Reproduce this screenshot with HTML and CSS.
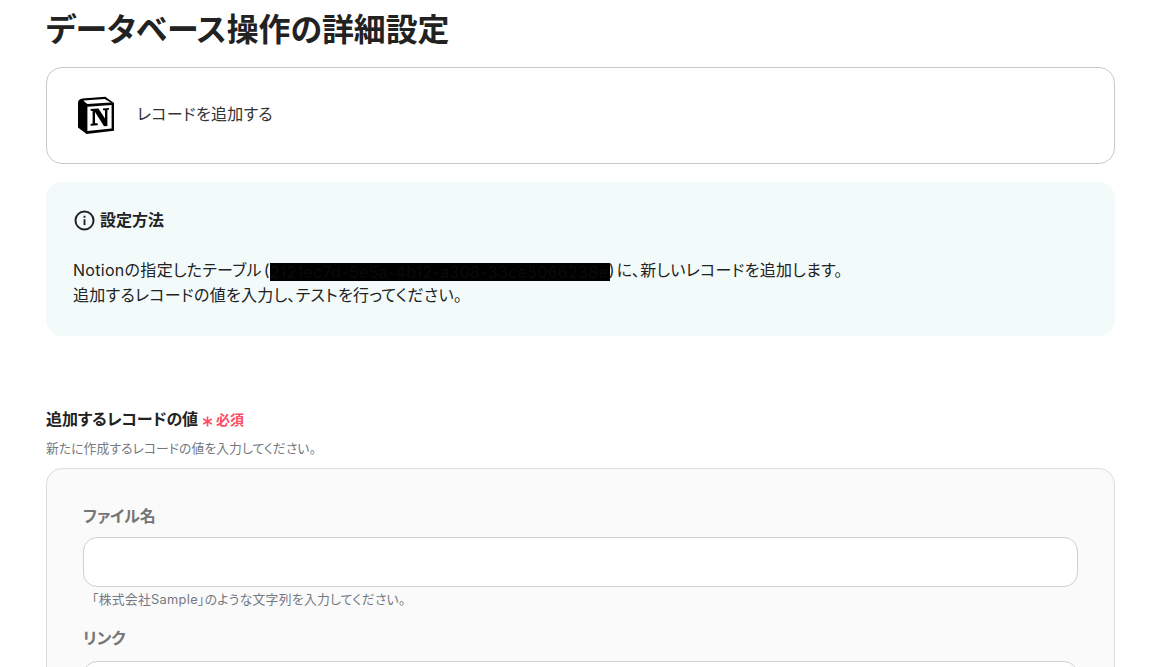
FILE: index.html
```html
<!DOCTYPE html>
<html lang="ja">
<head>
<meta charset="utf-8">
<title>データベース操作の詳細設定</title>
<link rel="stylesheet" href="styles.css">
</head>
<body>
<main class="page">
  <h1 class="title">データベース操作の詳細設定</h1>
  <section class="action-card">
    <svg class="notion-logo" viewBox="0 0 40 40" aria-hidden="true">
      <path d="M7 3.5 L29 1.5 L37.5 7.5 V34 L11 37 L3 31 V7 Z" fill="#fff"/>
      <path fill="#000" fill-rule="evenodd" d="M6.5 2.6 L29.3 .8 L38 7 V34.8 L10.6 37.9 L2 31.6 V6.5 C2 4.3 4 2.8 6.5 2.6 Z M8.4 5.8 L11.4 8 L34.8 6.5 L28.6 3 L7.5 4.4 Z M11.4 10.8 V35 L35.6 32.4 V9 Z"/>
      <path fill="#000" d="M14.6 13 L22.4 12.5 L29 22.6 V14.4 L27 14 V12.4 L33 12 V13.4 L31.4 14 V30 L28 30.3 L19 16 V27 L21.8 27.6 V29.2 L14.6 29.7 V28.1 L16.6 27.6 V15.1 L14.6 14.7 Z"/>
    </svg>
    <span class="action-name">レコードを追加する</span>
  </section>
  <section class="info">
    <h2 class="info-head">
      <svg class="info-icon" viewBox="0 0 20 20" aria-hidden="true">
        <circle cx="10" cy="10" r="8.6" fill="none" stroke="#222" stroke-width="1.9"/>
        <rect x="9.1" y="8.8" width="1.8" height="5.6" fill="#222"/>
        <rect x="9.1" y="5.5" width="1.8" height="1.9" fill="#222"/>
      </svg>
      設定方法
    </h2>
    <p class="info-text">Notionの指定したテーブル (<span class="redacted">2121ec7d-5e5a-4b12-a308-33ce5066238e</span>) に、新しいレコードを追加します。<br>追加するレコードの値を入力し、テストを行ってください。</p>
  </section>
  <section class="field">
    <div class="field-label">追加するレコードの値<span class="required"><svg class="asterisk" viewBox="0 0 12 12" aria-hidden="true"><path d="M6 .6 V11.4 M1.3 3.3 L10.7 8.7 M10.7 3.3 L1.3 8.7" fill="none" stroke="#fb4e64" stroke-width="1.8"/></svg>必須</span></div>
    <p class="field-help">新たに作成するレコードの値を入力してください。</p>
    <div class="panel">
      <label class="sub-label">ファイル名</label>
      <div class="input"></div>
      <p class="hint">「株式会社Sample」のような文字列を入力してください。</p>
      <label class="sub-label sub-label-next">リンク</label>
      <div class="input input-next"></div>
    </div>
  </section>
</main>
</body>
</html>
```
FILE: styles.css
```css
* { box-sizing: border-box; }
html, body { margin: 0; height: 667px; overflow: hidden; background: #fff; }
body { font-family: Inter, "Noto Sans CJK JP", sans-serif; color: #222; font-feature-settings: "palt"; }
.page { width: 1069px; margin-left: 46px; }
.title { margin: 0; padding-top: 10px; height: 67px; font-size: 31.9px; line-height: 40px; font-weight: 700; color: #222; }
.action-card { height: 97px; border: 1px solid #c9c9c9; border-radius: 16px; display: flex; align-items: center; padding-left: 29px; gap: 21px; }
.notion-logo { width: 40px; height: 40px; display: block; }
.action-name { font-size: 16px; letter-spacing: .3px; line-height: 24px; margin-bottom: 4px; color: #333; }
.info { margin-top: 18px; height: 154px; background: #f2fafa; border-radius: 16px; padding: 26px 27px; }
.info-head { margin: 0; display: flex; align-items: center; gap: 5px; font-size: 16px; line-height: 24px; font-weight: 700; }
.info-icon { width: 21px; height: 21px; margin-left: 1px; display: block; }
.info-text { margin: 26px 0 0; font-size: 16px; letter-spacing: .3px; word-spacing: -3px; line-height: 25px; color: #222; }
.redacted { background: #000; color: #0a0a0a; display: inline-block; line-height: 18px; height: 18px; width: 340px; margin-right: -1px; overflow: hidden; vertical-align: -5px; }
.field { margin-top: 71px; }
.field-label { font-size: 16px; letter-spacing: -.1px; line-height: 24px; font-weight: 700; color: #222; }
.required { margin-left: 4px; font-size: 14px; font-weight: 700; letter-spacing: 0; color: #fb4e64; }
.asterisk { width: 11px; height: 11px; margin-right: 3px; vertical-align: -2px; }
.field-help { margin: 7px 0 0; font-size: 12.8px; letter-spacing: .08px; line-height: 20px; color: #747880; }
.panel { margin-top: 9px; height: 400px; border: 1px solid #dcdce4; border-radius: 16px; background: #fafafb; padding: 35px 36px; }
.sub-label { display: block; font-size: 16px; letter-spacing: -.1px; line-height: 24px; font-weight: 700; color: #757575; }
.sub-label-next { margin-top: 16px; }
.input { margin-top: 9px; height: 50px; background: #fff; border: 1px solid #cfcfd6; border-radius: 14px; }
.input-next { margin-top: 11px; }
.hint { margin: 3px 0 0 9px; font-size: 12.8px; letter-spacing: .3px; line-height: 20px; color: #747880; }
```
